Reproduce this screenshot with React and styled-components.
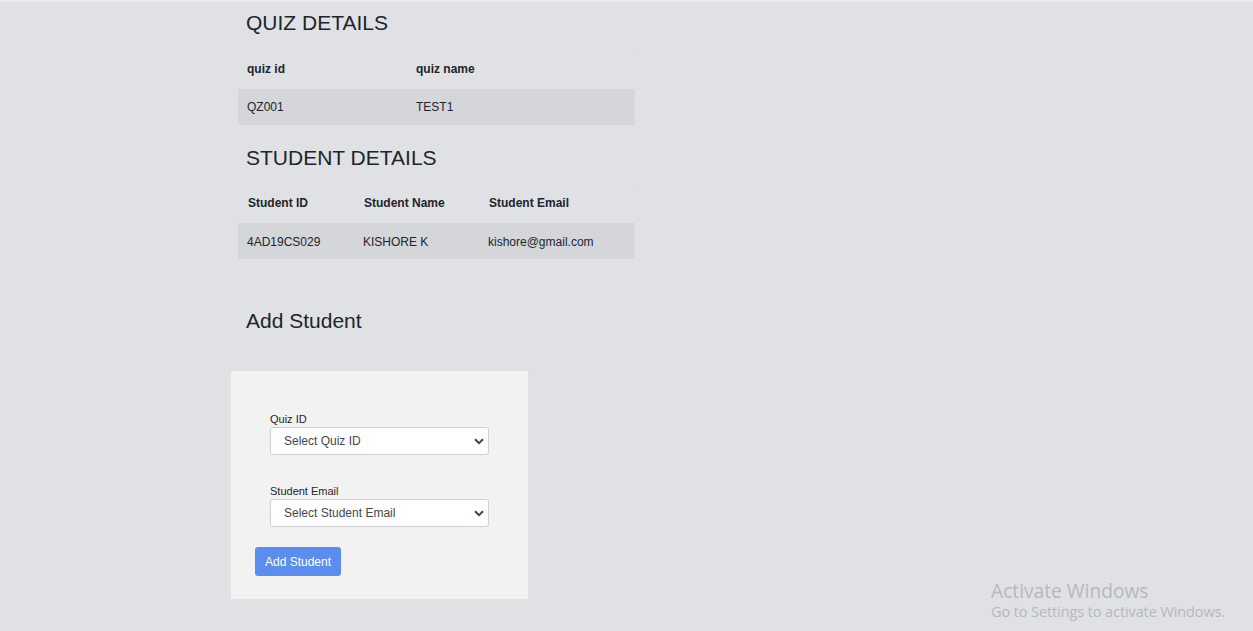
import React from "react";
import styled, { createGlobalStyle } from "styled-components";

const Global = createGlobalStyle`
  html, body { margin: 0; padding: 0; }
  body {
    background: #dfe1e5;
    font-family: "Liberation Sans", Arial, sans-serif;
    color: #212529;
    min-height: 631px;
  }
`;

const Page = styled.div`
  border-top: 2px solid #e8eaed;
  padding-left: 230px;
  min-height: 629px;
  box-sizing: border-box;
  position: relative;
`;

const Heading = styled.h2`
  margin: ${(p) => p.$top}px 0 0 16px;
  font-size: 21px;
  line-height: 25px;
  font-weight: 400;
  color: #212529;
`;

const Table = styled.table`
  margin: 17px 0 0 8px;
  width: 397px;
  border-collapse: collapse;
  table-layout: fixed;
  font-size: 12px;
  border-top: 1px solid #e3e5e8;
`;

const HeadCell = styled.th`
  text-align: left;
  font-weight: 700;
  height: 36px;
  padding: 0 0 4px ${(p) => p.$pad || 9}px;
  box-sizing: border-box;
  width: ${(p) => p.$w}px;
  color: #212529;
`;

const BodyRow = styled.tr`
  background: #d5d6da;
`;

const Cell = styled.td`
  height: 36px;
  padding: 1px 0 0 9px;
  box-sizing: border-box;
  color: #212529;
`;

const Card = styled.div`
  margin-top: 37px;
  width: 299px;
  height: 230px;
  box-sizing: border-box;
  background: #f2f2f2;
  border: 1px solid #e2e3e5;
  padding: 42px 24px 0 24px;
  display: flex;
  flex-direction: column;
`;

const Group = styled.div`
  padding-left: 15px;
  margin-bottom: ${(p) => p.$mb}px;
  display: flex;
  flex-direction: column;
`;

const Label = styled.label`
  font-size: 11px;
  line-height: 13px;
  margin-bottom: 1px;
  color: #212529;
`;

const SelectWrap = styled.div`
  position: relative;
  width: 219px;
`;

const Select = styled.select`
  appearance: none;
  -webkit-appearance: none;
  width: 100%;
  height: 28px;
  box-sizing: border-box;
  border: 1px solid #ced1d6;
  border-radius: 3px;
  background: #ffffff;
  font-family: "Liberation Sans", Arial, sans-serif;
  font-size: 12px;
  color: #44474c;
  padding: 0 0 0 13px;
  outline: none;
`;

const Chevron = styled.svg`
  position: absolute;
  right: 5px;
  top: 11px;
  pointer-events: none;
`;

const Button = styled.button`
  align-self: flex-start;
  height: 29px;
  padding: 0 10px;
  background: #5b8def;
  color: #ffffff;
  border: none;
  border-radius: 3px;
  font-family: "Liberation Sans", Arial, sans-serif;
  font-size: 12px;
  cursor: pointer;
`;

const Watermark = styled.div`
  position: absolute;
  left: 991px;
  top: 579px;
  font-family: "Open Sans", "Noto Sans", sans-serif;
  color: #b6b8bc;
  line-height: 1;
`;

const WmTitle = styled.div`
  font-size: 19.2px;
  margin-bottom: 5px;
`;

const WmSub = styled.div`
  font-size: 14.5px;
  letter-spacing: -0.1px;
`;

const Arrow = () => (
  <Chevron width="10" height="7" viewBox="0 0 10 7">
    <path d="M1 1.2 L5 5.2 L9 1.2" fill="none" stroke="#3d4047" strokeWidth="2" />
  </Chevron>
);

export default function App() {
  return (
    <>
      <Global />
      <Page>
        <Heading $top={8}>QUIZ DETAILS</Heading>
        <Table>
          <thead>
            <tr>
              <HeadCell $w={169}>quiz id</HeadCell>
              <HeadCell $w={228}>quiz name</HeadCell>
            </tr>
          </thead>
          <tbody>
            <BodyRow>
              <Cell>QZ001</Cell>
              <Cell>TEST1</Cell>
            </BodyRow>
          </tbody>
        </Table>

        <Heading $top={20}>STUDENT DETAILS</Heading>
        <Table>
          <thead>
            <tr>
              <HeadCell $w={116} $pad={10}>Student ID</HeadCell>
              <HeadCell $w={125} $pad={10}>Student Name</HeadCell>
              <HeadCell $w={156} $pad={10}>Student Email</HeadCell>
            </tr>
          </thead>
          <tbody>
            <BodyRow>
              <Cell>4AD19CS029</Cell>
              <Cell>KISHORE K</Cell>
              <Cell>kishore@gmail.com</Cell>
            </BodyRow>
          </tbody>
        </Table>

        <Heading $top={49}>Add Student</Heading>

        <Card>
          <Group $mb={30}>
            <Label>Quiz ID</Label>
            <SelectWrap>
              <Select defaultValue="">
                <option value="">Select Quiz ID</option>
                <option value="QZ001">QZ001</option>
              </Select>
              <Arrow />
            </SelectWrap>
          </Group>
          <Group $mb={20}>
            <Label>Student Email</Label>
            <SelectWrap>
              <Select defaultValue="">
                <option value="">Select Student Email</option>
                <option value="kishore@gmail.com">kishore@gmail.com</option>
              </Select>
              <Arrow />
            </SelectWrap>
          </Group>
          <Button>Add Student</Button>
        </Card>

        <Watermark>
          <WmTitle>Activate Windows</WmTitle>
          <WmSub>Go to Settings to activate Windows.</WmSub>
        </Watermark>
      </Page>
    </>
  );
}
